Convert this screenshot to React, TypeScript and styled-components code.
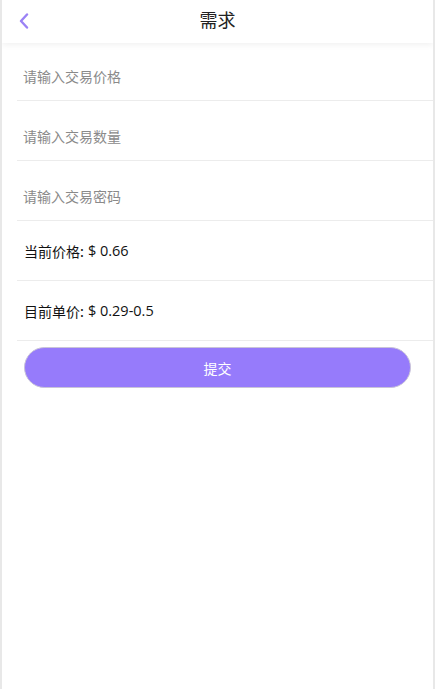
import React, { FunctionComponent } from 'react'
import styled, { createGlobalStyle } from 'styled-components'

const GlobalStyle = createGlobalStyle`
    html, body {
        margin: 0;
        padding: 0;
        background: #ffffff;
    }
    * {
        box-sizing: border-box;
    }
`

const Page = styled.div`
    width: 435px;
    height: 689px;
    display: flex;
    flex-direction: column;
    background: #ffffff;
    border-left: 2px solid #e8e8e8;
    border-right: 2px solid #e8e8e8;
    font-family: 'Noto Sans CJK SC', 'Noto Sans', sans-serif;
    overflow: hidden;
`

const Header = styled.div`
    position: relative;
    z-index: 2;
    height: 43px;
    flex-shrink: 0;
    display: flex;
    align-items: center;
    justify-content: center;
    padding-bottom: 6px;
    background: #ffffff;
    box-shadow: 0 2px 6px rgba(0, 0, 0, 0.06);
`

const BackButton = styled.button`
    position: absolute;
    left: 11px;
    top: 10px;
    width: 22px;
    height: 22px;
    padding: 0;
    border: none;
    background: none;
    display: flex;
    align-items: center;
    justify-content: center;
    cursor: pointer;
`

const Title = styled.h1`
    margin: 0;
    font-size: 18px;
    font-weight: 400;
    color: #222222;
`

const Form = styled.div`
    display: flex;
    flex-direction: column;
    margin-top: -2px;
    padding-left: 15px;
`

const InputRow = styled.div`
    height: 60px;
    padding-top: 25px;
    border-bottom: 1px solid #ececec;
`

const Input = styled.input`
    display: block;
    width: 100%;
    height: 20px;
    padding: 0 6px;
    border: none;
    outline: none;
    font-family: inherit;
    font-size: 14px;
    color: #333333;
    background: transparent;

    &::placeholder {
        color: #8a8a8a;
    }
`

const InfoRow = styled.div`
    height: 60px;
    display: flex;
    align-items: center;
    padding-left: 7px;
    border-bottom: 1px solid #ececec;
    font-size: 14px;
    color: #111111;
`

const Value = styled.span`
    margin-left: 4px;
    font-family: 'Open Sans', 'Noto Sans', sans-serif;
    font-size: 14.5px;
`

const ButtonWrap = styled.div`
    padding: 6px 22px 0 22px;
`

const SubmitButton = styled.button`
    width: 100%;
    height: 41px;
    border: 1px solid #c9c4d8;
    border-radius: 21px;
    background: #967bfb;
    color: #ffffff;
    font-family: inherit;
    font-size: 14px;
    cursor: pointer;
`

const fields = ['请输入交易价格', '请输入交易数量', '请输入交易密码']

const App: FunctionComponent = () => {
    return (
        <Page>
            <GlobalStyle />
            <Header>
                <BackButton aria-label="返回">
                    <svg width="12" height="16" viewBox="0 0 12 16">
                        <path
                            d="M9 1.5 L3 8 L9 14.5"
                            fill="none"
                            stroke="#9b82f5"
                            strokeWidth="2.4"
                            strokeLinecap="round"
                            strokeLinejoin="round"
                        />
                    </svg>
                </BackButton>
                <Title>需求</Title>
            </Header>
            <Form>
                {fields.map((f) => (
                    <InputRow key={f}>
                        <Input
                            type={f.includes('密码') ? 'password' : 'text'}
                            placeholder={f}
                        />
                    </InputRow>
                ))}
                <InfoRow>
                    当前价格:<Value>$ 0.66</Value>
                </InfoRow>
                <InfoRow>
                    目前单价:<Value>$ 0.29-0.5</Value>
                </InfoRow>
            </Form>
            <ButtonWrap>
                <SubmitButton>提交</SubmitButton>
            </ButtonWrap>
        </Page>
    )
}

export default App
